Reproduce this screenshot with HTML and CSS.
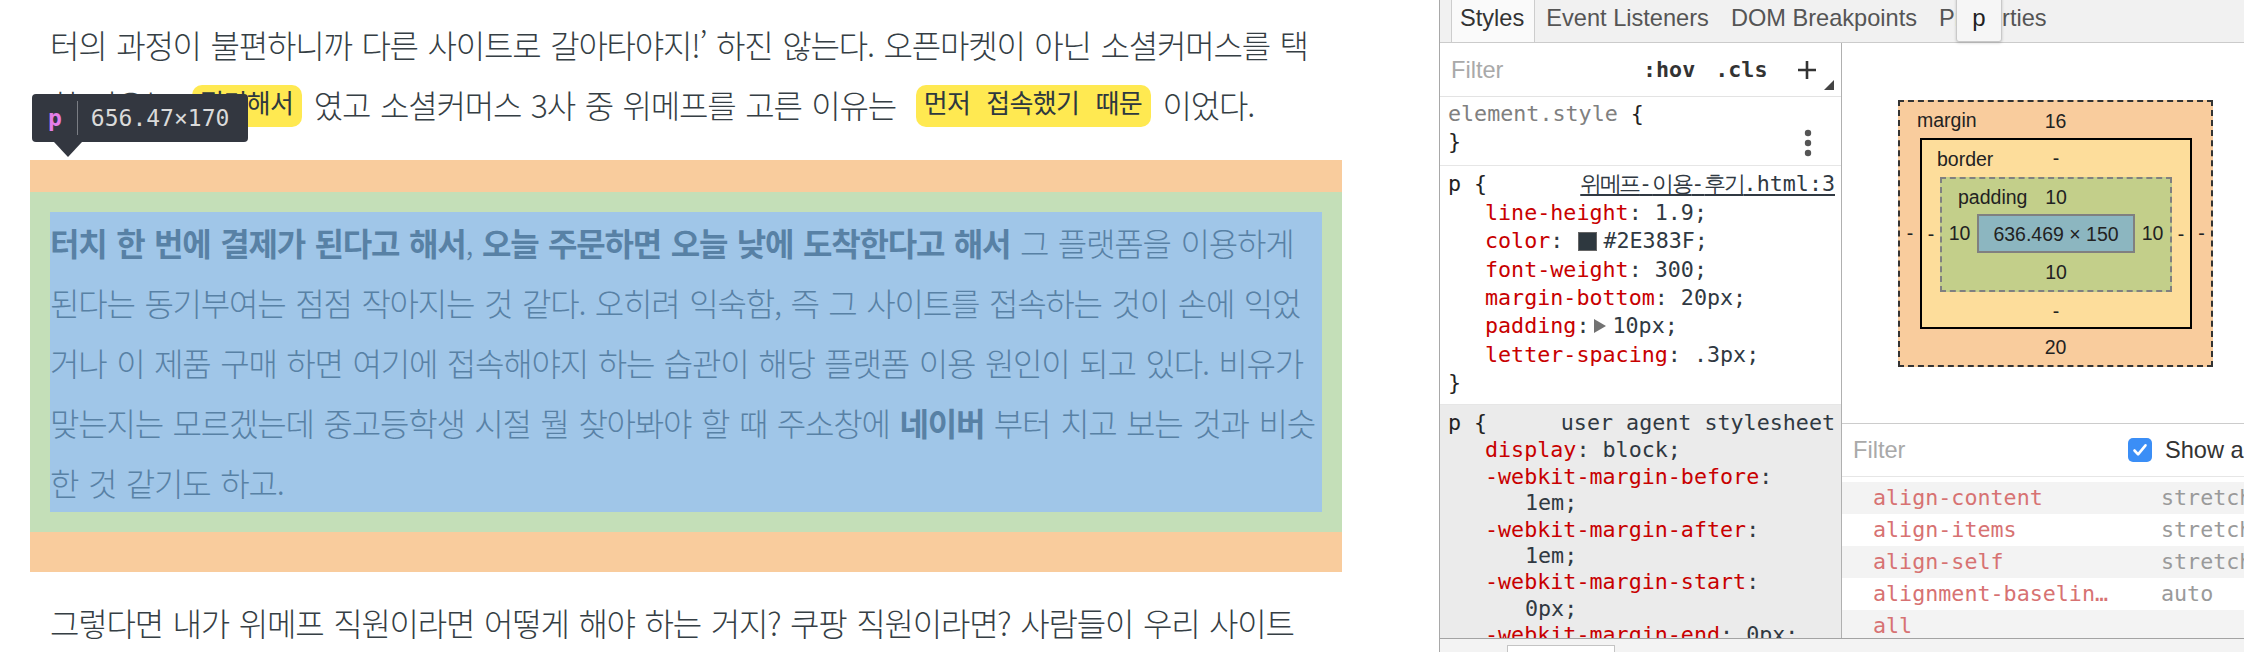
FILE: index.html
```html
<!DOCTYPE html>
<html lang="ko">
<head>
<meta charset="utf-8">
<title>위메프 이용 후기 - DevTools</title>
<link rel="stylesheet" href="styles.css">
</head>
<body>
<div class="screen">
  <main class="page">
    <article class="post">
      <p class="para para-first">터의 과정이 불편하니까 다른 사이트로 갈아타야지!’ 하진 않는다. 오픈마켓이 아닌 소셜커머스를 택<br>한 이유는 <code class="mark">편리해서</code> 였고 소셜커머스 3사 중 위메프를 고른 이유는 <code class="mark">먼저 접속했기 때문</code> 이었다.</p>
      <div class="box-margin">
        <p class="box-padding"><span class="box-content"><strong>터치 한 번에 결제가 된다고 해서</strong>, <strong>오늘 주문하면 오늘 낮에 도착한다고 해서</strong> 그 플랫폼을 이용하게<br>된다는 동기부여는 점점 작아지는 것 같다. 오히려 익숙함, 즉 그 사이트를 접속하는 것이 손에 익었<br>거나 이 제품 구매 하면 여기에 접속해야지 하는 습관이 해당 플랫폼 이용 원인이 되고 있다. 비유가<br>맞는지는 모르겠는데 중고등학생 시절 뭘 찾아봐야 할 때 주소창에 <strong>네이버</strong> 부터 치고 보는 것과 비슷<br>한 것 같기도 하고.</span></p>
      </div>
      <p class="para">그렇다면 내가 위메프 직원이라면 어떻게 해야 하는 거지? 쿠팡 직원이라면? 사람들이 우리 사이트</p>
    </article>
    <div class="el-tip">
      <span class="el-tag">p</span><span class="el-sep"></span><span class="el-size">656.47×170</span>
    </div>
  </main>

  <aside class="devtools">
    <nav class="tabbar">
      <span class="tab active">Styles</span>
      <span class="tab">Event Listeners</span>
      <span class="tab">DOM Breakpoints</span>
      <span class="tab">Properties</span>
    </nav>
    <div class="panes">
      <section class="styles-pane">
        <div class="filterbar">
          <span class="filter-ph">Filter</span>
          <span class="tool hov">:hov</span>
          <span class="tool cls">.cls</span>
          <svg class="plus" width="20" height="20" viewBox="0 0 20 20"><path d="M10 1v18M1 10h18" stroke="#333" stroke-width="2.6"/></svg>
          <svg class="corner" width="10" height="10" viewBox="0 0 10 10"><path d="M10 0L10 10L0 10Z" fill="#444"/></svg>
        </div>

        <div class="rule rule-el">
          <div class="sel-line"><span class="sel-dim">element.style</span> {</div>
          <div class="sel-line">}</div>
          <svg class="dots" width="8" height="28" viewBox="0 0 8 28"><circle cx="4" cy="4" r="3.2" fill="#555"/><circle cx="4" cy="14" r="3.2" fill="#555"/><circle cx="4" cy="24" r="3.2" fill="#555"/></svg>
        </div>

        <div class="rule rule-p">
          <div class="sel-line split"><span>p {</span><span class="src"><span class="ko">위메프</span>-<span class="ko">이용</span>-<span class="ko">후기</span>.html:3</span></div>
          <div class="prop"><span class="pn">line-height</span>: 1.9;</div>
          <div class="prop"><span class="pn">color</span>: <span class="swatch"></span>#2E383F;</div>
          <div class="prop"><span class="pn">font-weight</span>: 300;</div>
          <div class="prop"><span class="pn">margin-bottom</span>: 20px;</div>
          <div class="prop"><span class="pn">padding</span>:<span class="expand"><span class="tri"></span></span>10px;</div>
          <div class="prop"><span class="pn">letter-spacing</span>: .3px;</div>
          <div class="sel-line">}</div>
        </div>

        <div class="rule rule-ua">
          <div class="sel-line split"><span>p {</span><span class="src-ua">user agent stylesheet</span></div>
          <div class="prop ua"><span class="pn">display</span>: block;</div>
          <div class="prop ua"><span class="pn">-webkit-margin-before</span>:</div>
          <div class="prop ua cont">1em;</div>
          <div class="prop ua"><span class="pn">-webkit-margin-after</span>:</div>
          <div class="prop ua cont">1em;</div>
          <div class="prop ua"><span class="pn">-webkit-margin-start</span>:</div>
          <div class="prop ua cont">0px;</div>
          <div class="prop ua"><span class="pn">-webkit-margin-end</span>: 0px;</div>
        </div>
      </section>

      <section class="computed-pane">
        <div class="bm-area">
          <div class="bm bm-margin">
            <span class="bm-label">margin</span>
            <div class="bm-top">16</div>
            <div class="bm-mid">
              <span class="bm-side m-side">-</span>
              <div class="bm bm-border">
                <span class="bm-label">border</span>
                <div class="bm-top b-top">-</div>
                <div class="bm-mid">
                  <span class="bm-side b-side">-</span>
                  <div class="bm bm-padding">
                    <span class="bm-label">padding</span>
                    <div class="bm-top p-top">10</div>
                    <div class="bm-mid">
                      <span class="bm-side p-side">10</span>
                      <div class="bm-content">636.469 × 150</div>
                      <span class="bm-side p-side">10</span>
                    </div>
                    <div class="bm-bottom p-bottom">10</div>
                  </div>
                  <span class="bm-side b-side">-</span>
                </div>
                <div class="bm-bottom b-bottom">-</div>
              </div>
              <span class="bm-side m-side">-</span>
            </div>
            <div class="bm-bottom m-bottom">20</div>
          </div>
        </div>
        <div class="cfilter">
          <span class="cfilter-ph">Filter</span>
          <span class="checkbox"><svg width="24" height="24" viewBox="0 0 24 24"><path d="M6.5 12.5l3.6 3.8 7.4-9" fill="none" stroke="#fff" stroke-width="2.6" stroke-linecap="round" stroke-linejoin="round"/></svg></span>
          <span class="show-all">Show all</span>
        </div>
        <div class="cprops">
          <div class="crow"><span class="cn">align-content</span><span class="cv">stretch</span></div>
          <div class="crow"><span class="cn">align-items</span><span class="cv">stretch</span></div>
          <div class="crow"><span class="cn">align-self</span><span class="cv">stretch</span></div>
          <div class="crow"><span class="cn">alignment-baselin…</span><span class="cv">auto</span></div>
          <div class="crow"><span class="cn">all</span><span class="cv"></span></div>
        </div>
      </section>
    </div>
    <div class="statusbar"><span class="status-input"></span></div>
  </aside>

  <div class="tab-tip">p</div>
</div>
</body>
</html>
```

FILE: styles.css
```css
* { box-sizing: border-box; }
html, body { margin: 0; padding: 0; }
body {
  width: 2244px;
  height: 652px;
  overflow: hidden;
  background: #fff;
  font-family: "Liberation Sans", Arial, sans-serif;
}
.screen {
  position: relative;
  display: flex;
  width: 2244px;
  height: 652px;
  overflow: hidden;
}

/* ---------- page ---------- */
.page {
  position: relative;
  flex: none;
  width: 1439px;
  height: 652px;
  overflow: hidden;
  background: #fff;
}
.post {
  width: 1312px;
  margin-left: 30px;
  font-family: "Noto Sans CJK KR", "Noto Sans", sans-serif;
  font-size: 32px;
  line-height: 60px;
  font-weight: 300;
  color: #353e44;
  letter-spacing: -1.2px;
  word-spacing: 1.9px;
  white-space: nowrap;
}
.para { margin: 0; padding: 20px; }
.para-first { padding-top: 14px; margin-bottom: 6px; }
.mark {
  font-family: "Liberation Mono", "Noto Sans CJK KR", monospace;
  font-size: 26px;
  line-height: 30px;
  font-weight: 400;
  letter-spacing: -0.7px;
  word-spacing: 1.3px;
  vertical-align: 5px;
  color: #2e383f;
  background: #ffe951;
  border-radius: 10px;
  padding: 6px 9px 6px 8px;
  margin: 0 2px 0 10px;
}
.box-margin {
  background: #f9cc9d;
  padding: 32px 0 40px;
}
.box-padding {
  margin: 0;
  padding: 20px;
  background: #c4dfb8;
}
.box-content {
  display: block;
  height: 300px;
  background: #a0c6e8;
  color: #5881a5;
}
.box-content strong { font-weight: 700; }

.el-tip {
  position: absolute;
  left: 32px;
  top: 94px;
  width: 216px;
  height: 48px;
  background: #333740;
  border-radius: 4px;
  display: flex;
  align-items: center;
  padding-left: 16px;
  font-family: "DejaVu Sans Mono", monospace;
  font-size: 23px;
}
.el-tip::after {
  content: "";
  position: absolute;
  left: 22px;
  top: 48px;
  border-left: 14px solid transparent;
  border-right: 14px solid transparent;
  border-top: 15px solid #333740;
}
.el-tag { color: #e47ee8; font-weight: bold; }
.el-sep {
  width: 1px;
  height: 34px;
  background: #7a7d84;
  margin: 0 13px 0 15px;
}
.el-size { color: #dadada; }

/* ---------- devtools ---------- */
.devtools {
  flex: 1;
  min-width: 0;
  display: flex;
  flex-direction: column;
  border-left: 1px solid #a8a8a8;
  background: #fff;
}
.tabbar {
  flex: none;
  height: 43px;
  display: flex;
  padding-left: 11px;
  background: #f1f1f1;
  border-bottom: 1px solid #cbcbcb;
  font-size: 23.6px;
  color: #555;
  white-space: nowrap;
}
.tab {
  flex: none;
  padding: 0 11px;
  line-height: 36px;
}
.tab.active {
  height: 42px;
  padding: 0 10px 0 8px;
  color: #333;
  background: #fafafa;
  border-left: 1px solid #cdcdcd;
  border-right: 1px solid #cdcdcd;
}
.tab-tip {
  position: absolute;
  left: 1956px;
  top: -4px;
  width: 46px;
  height: 46px;
  padding-top: 3px;
  background: #f6f6f6;
  border: 1px solid #c9c9c9;
  border-radius: 3px;
  box-shadow: 0 1px 3px rgba(0,0,0,.18);
  text-align: center;
  font-size: 24px;
  line-height: 36px;
  color: #222;
}

.panes {
  flex: 1;
  min-height: 0;
  display: flex;
}
.styles-pane {
  flex: none;
  width: 402px;
  display: flex;
  flex-direction: column;
  border-right: 1px solid #b0b0b0;
  overflow: hidden;
}
.filterbar {
  flex: none;
  height: 54px;
  display: flex;
  align-items: center;
  padding-left: 11px;
  border-bottom: 1px solid #e3e3e3;
  position: relative;
}
.filterbar > * { flex: none; }
.filter-ph {
  width: 192px;
  font-size: 23.6px;
  line-height: 28px;
  color: #a9a9a9;
}
.tool {
  font-family: "DejaVu Sans Mono", monospace;
  font-size: 21.7px;
  font-weight: bold;
  color: #333;
}
.cls { margin-left: 20px; }
.plus { margin-left: 30px; }
.corner { margin-left: 7px; align-self: flex-end; margin-bottom: 6px; }

.rule {
  position: relative;
  flex: none;
  font-family: "DejaVu Sans Mono", monospace;
  font-size: 21.7px;
  line-height: 28.4px;
  color: #222;
  white-space: nowrap;
  border-bottom: 1px solid #e6e6e6;
}
.rule-el { padding: 3px 0 8.2px; }
.rule-p { padding: 4.3px 0 6px; }
.rule-ua {
  flex: 1;
  padding-top: 4.5px;
  background: #ebebeb;
  border-bottom: none;
  overflow: hidden;
}
.sel-line { padding-left: 8px; }
.sel-line.split {
  display: flex;
  justify-content: space-between;
  padding-right: 6px;
}
.sel-dim { color: #808080; }
.src {
  color: #303942;
  text-decoration: underline;
  text-underline-offset: 3px;
}
.src .ko { letter-spacing: -2.4px; }
.src-ua { color: #303942; }
.dots {
  position: absolute;
  right: 29px;
  top: 32px;
}
.prop { padding-left: 45px; color: #303942; }
.prop.ua { line-height: 26.4px; }
.prop.cont { padding-left: 85px; }
.pn { color: #c80000; }
.swatch {
  display: inline-block;
  width: 19px;
  height: 19px;
  margin: 0 6px 0 2px;
  vertical-align: -3px;
  background: #2e383f;
  border: 1px solid #666;
}
.expand {
  display: inline-block;
  width: 23px;
  padding-left: 5px;
}
.tri {
  display: inline-block;
  width: 0;
  height: 0;
  border-left: 12px solid #727272;
  border-top: 7px solid transparent;
  border-bottom: 7px solid transparent;
}

/* computed pane */
.computed-pane {
  flex: 1;
  min-width: 0;
  display: flex;
  flex-direction: column;
  overflow: hidden;
}
.bm-area {
  flex: none;
  height: 381px;
  padding: 57px 0 0 56px;
  border-bottom: 1px solid #cccccc;
  font-size: 19.5px;
  color: #222;
}
.bm {
  position: relative;
  display: flex;
  flex-direction: column;
  flex: none;
}
.bm-label {
  position: absolute;
  line-height: 36px;
}
.bm-margin {
  width: 315px;
  height: 267px;
  background: #f9cc9d;
  border: 2px dashed #333;
}
.bm-margin > .bm-label { left: 17px; top: 0; }
.bm-border {
  width: 272px;
  height: 191px;
  background: #fddd9b;
  border: 2px solid #000;
}
.bm-border > .bm-label { left: 15px; top: 1px; }
.bm-padding {
  width: 232px;
  height: 115px;
  background: #c3cf8a;
  border: 2px dashed #808080;
}
.bm-padding > .bm-label { left: 16px; top: 0; }
.bm-top, .bm-bottom {
  text-align: center;
  flex: none;
}
.bm-top { height: 36px; line-height: 38px; }
.bm-mid { display: flex; align-items: center; flex: none; }
.bm-bottom { height: 36px; line-height: 36px; }
.b-top { height: 37px; line-height: 37px; }
.b-bottom { height: 35px; line-height: 38px; }
.p-top { height: 35px; line-height: 36px; }
.p-bottom { height: 37px; line-height: 38px; }
.m-bottom { height: 36px; line-height: 36px; }
.bm-side { text-align: center; flex: none; }
.m-side { width: 20px; }
.m-side:last-child { width: 19px; }
.b-side { width: 18px; }
.p-side { width: 35px; }
.bm-content {
  flex: none;
  width: 158px;
  height: 39px;
  line-height: 36px;
  text-align: center;
  background: #8cb6c0;
  border: 2px solid #808080;
}

.cfilter {
  flex: none;
  height: 53px;
  display: flex;
  align-items: center;
  padding-left: 11px;
  border-bottom: 1px solid #e6e6e6;
  font-size: 23.6px;
  white-space: nowrap;
}
.cfilter > * { flex: none; }
.cfilter-ph { width: 275px; color: #a9a9a9; }
.checkbox {
  width: 24px;
  height: 24px;
  border-radius: 5px;
  background: #3b8ef6;
}
.checkbox svg { display: block; }
.show-all { margin-left: 13px; color: #333; }
.cprops { padding-top: 5px; }
.crow {
  display: flex;
  height: 32px;
  padding-left: 31px;
  font-family: "DejaVu Sans Mono", monospace;
  font-size: 21.7px;
  line-height: 32px;
  white-space: nowrap;
}
.crow:nth-child(odd) { background: #f3f3f3; }
.cn { width: 288px; flex: none; color: #d77272; }
.cv { flex: none; color: #9a9a9a; }

.statusbar {
  flex: none;
  height: 14px;
  border-top: 1px solid #a3a3a3;
  background: #f3f3f3;
  padding: 6px 0 0 67px;
}
.status-input {
  display: block;
  width: 108px;
  height: 12px;
  background: #fff;
  border: 1px solid #c4c4c4;
}
```
